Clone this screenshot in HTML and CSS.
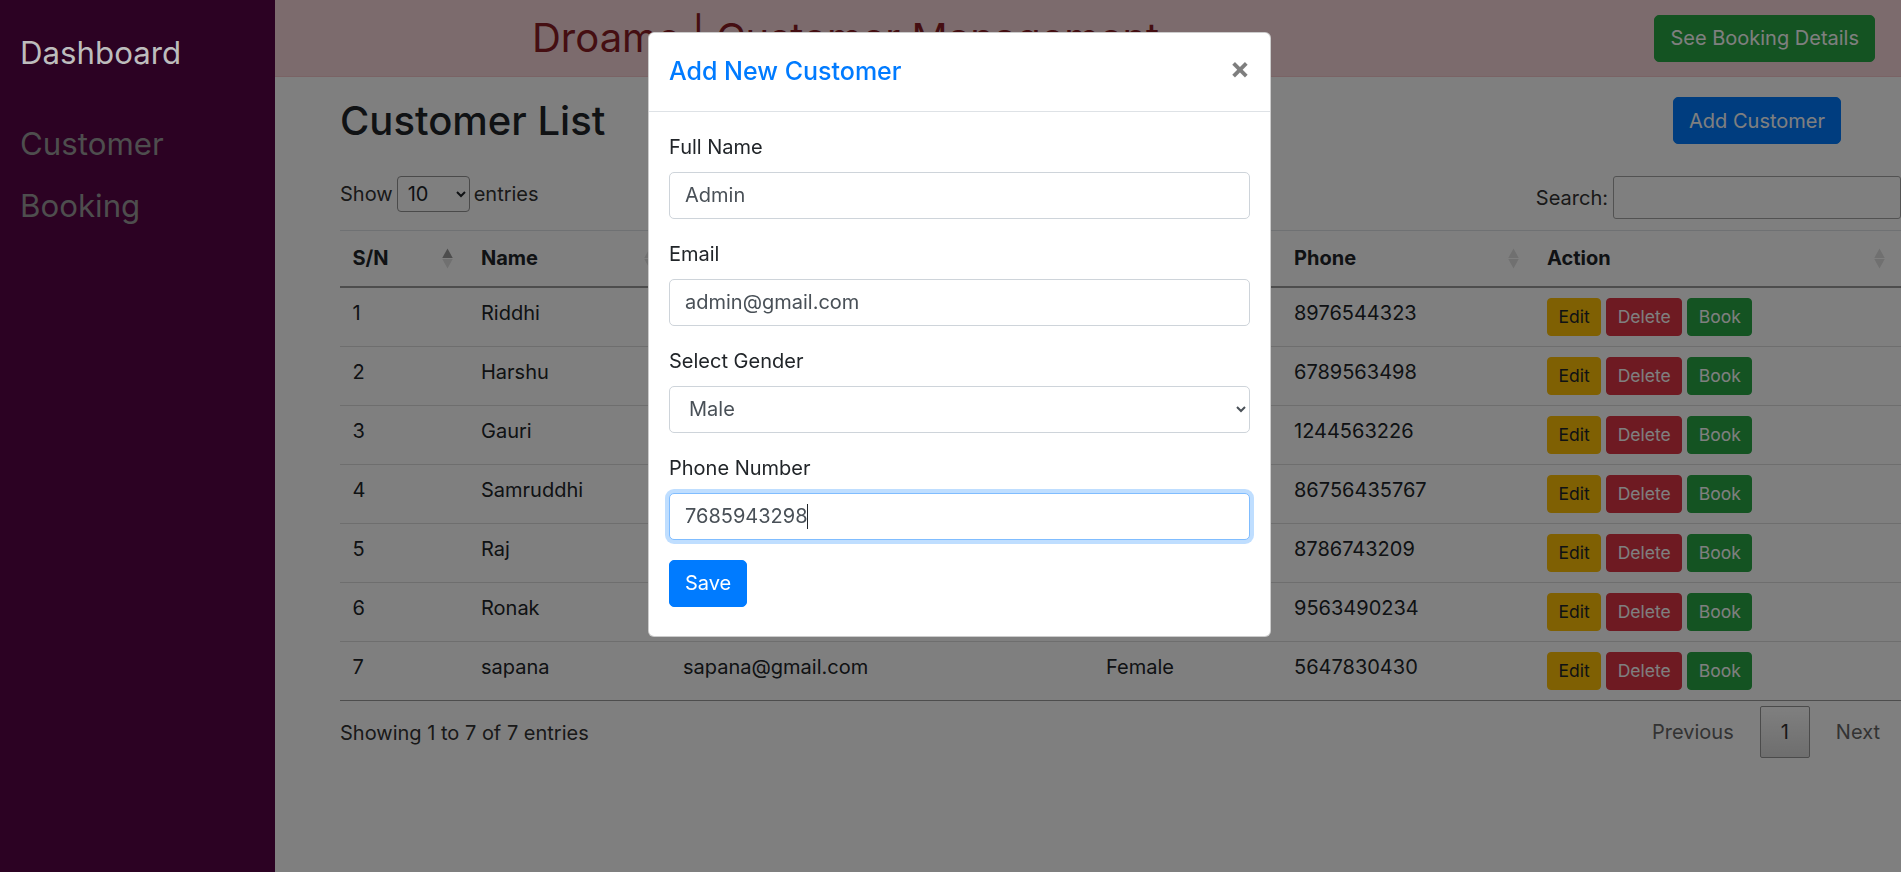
FILE: index.html
```html
<!DOCTYPE html>
<html lang="en">
<head>
<meta charset="utf-8">
<title>Droame | Customer Management</title>
<link rel="stylesheet" href="styles.css">
</head>
<body>
<aside class="sidebar">
  <div class="brand">Dashboard</div>
  <ul class="nav">
    <li>Customer</li>
    <li>Booking</li>
  </ul>
</aside>

<div class="main">
  <header class="topbar">
    <h1>Droame | Customer Management</h1>
    <button class="btn btn-success">See Booking Details</button>
  </header>

  <div class="content">
    <div class="title-row">
      <h2>Customer List</h2>
      <button class="btn btn-primary">Add Customer</button>
    </div>

    <div class="dt-top">
      <label class="length">Show
        <select class="length-select"><option>10</option><option>25</option><option>50</option></select>
        entries</label>
      <label class="search">Search:<input type="search" class="search-input"></label>
    </div>

    <table class="data">
      <colgroup>
        <col class="c-sn"><col class="c-name"><col class="c-email"><col class="c-gender"><col class="c-phone"><col class="c-action">
      </colgroup>
      <thead>
        <tr>
          <th>S/N<svg class="sort" viewBox="0 0 10 20"><polygon points="5,0.5 10,9.5 0,9.5" fill="#9a9a9a"/><polygon points="0,10.5 10,10.5 5,19.5" fill="#e0e0e0"/></svg></th>
          <th>Name<svg class="sort" viewBox="0 0 10 20"><polygon points="5,0.5 10,9.5 0,9.5" fill="#e0e0e0"/><polygon points="0,10.5 10,10.5 5,19.5" fill="#e0e0e0"/></svg></th>
          <th>Email<svg class="sort" viewBox="0 0 10 20"><polygon points="5,0.5 10,9.5 0,9.5" fill="#e0e0e0"/><polygon points="0,10.5 10,10.5 5,19.5" fill="#e0e0e0"/></svg></th>
          <th>Gender<svg class="sort" viewBox="0 0 10 20"><polygon points="5,0.5 10,9.5 0,9.5" fill="#e0e0e0"/><polygon points="0,10.5 10,10.5 5,19.5" fill="#e0e0e0"/></svg></th>
          <th>Phone<svg class="sort" viewBox="0 0 10 20"><polygon points="5,0.5 10,9.5 0,9.5" fill="#e0e0e0"/><polygon points="0,10.5 10,10.5 5,19.5" fill="#e0e0e0"/></svg></th>
          <th>Action<svg class="sort" viewBox="0 0 10 20"><polygon points="5,0.5 10,9.5 0,9.5" fill="#e0e0e0"/><polygon points="0,10.5 10,10.5 5,19.5" fill="#e0e0e0"/></svg></th>
        </tr>
      </thead>
      <tbody>
        <tr><td>1</td><td>Riddhi</td><td>riddhi@gmail.com</td><td>Female</td><td>8976544323</td><td><div class="actions"><button class="btn btn-sm btn-warning">Edit</button><button class="btn btn-sm btn-danger">Delete</button><button class="btn btn-sm btn-success">Book</button></div></td></tr>
        <tr><td>2</td><td>Harshu</td><td>harshu@gmail.com</td><td>Female</td><td>6789563498</td><td><div class="actions"><button class="btn btn-sm btn-warning">Edit</button><button class="btn btn-sm btn-danger">Delete</button><button class="btn btn-sm btn-success">Book</button></div></td></tr>
        <tr><td>3</td><td>Gauri</td><td>gauri@gmail.com</td><td>Female</td><td>1244563226</td><td><div class="actions"><button class="btn btn-sm btn-warning">Edit</button><button class="btn btn-sm btn-danger">Delete</button><button class="btn btn-sm btn-success">Book</button></div></td></tr>
        <tr><td>4</td><td>Samruddhi</td><td>samruddhi@gmail.com</td><td>Female</td><td>86756435767</td><td><div class="actions"><button class="btn btn-sm btn-warning">Edit</button><button class="btn btn-sm btn-danger">Delete</button><button class="btn btn-sm btn-success">Book</button></div></td></tr>
        <tr><td>5</td><td>Raj</td><td>raj@gmail.com</td><td>Male</td><td>8786743209</td><td><div class="actions"><button class="btn btn-sm btn-warning">Edit</button><button class="btn btn-sm btn-danger">Delete</button><button class="btn btn-sm btn-success">Book</button></div></td></tr>
        <tr><td>6</td><td>Ronak</td><td>ronak@gmail.com</td><td>Male</td><td>9563490234</td><td><div class="actions"><button class="btn btn-sm btn-warning">Edit</button><button class="btn btn-sm btn-danger">Delete</button><button class="btn btn-sm btn-success">Book</button></div></td></tr>
        <tr><td>7</td><td>sapana</td><td>sapana@gmail.com</td><td>Female</td><td>5647830430</td><td><div class="actions"><button class="btn btn-sm btn-warning">Edit</button><button class="btn btn-sm btn-danger">Delete</button><button class="btn btn-sm btn-success">Book</button></div></td></tr>
      </tbody>
    </table>

    <div class="dt-bottom">
      <div class="info">Showing 1 to 7 of 7 entries</div>
      <div class="paginate">
        <span class="page-btn disabled">Previous</span>
        <span class="page-btn current">1</span>
        <span class="page-btn disabled">Next</span>
      </div>
    </div>
  </div>
</div>

<div class="backdrop"></div>

<div class="modal">
  <div class="modal-header">
    <h5 class="modal-title">Add New Customer</h5>
    <button class="close" type="button">×</button>
  </div>
  <div class="modal-body">
    <div class="form-group">
      <label class="form-label">Full Name</label>
      <input class="form-control" type="text" value="Admin">
    </div>
    <div class="form-group">
      <label class="form-label">Email</label>
      <input class="form-control" type="email" value="admin@gmail.com">
    </div>
    <div class="form-group">
      <label class="form-label">Select Gender</label>
      <select class="form-control"><option>Male</option><option>Female</option></select>
    </div>
    <div class="form-group">
      <label class="form-label">Phone Number</label>
      <div class="caret-wrap">
        <input class="form-control is-focused" type="text" value="7685943298">
        <span class="caret"></span>
      </div>
    </div>
    <button class="btn btn-primary">Save</button>
  </div>
</div>
</body>
</html>
```

FILE: styles.css
```css
* { box-sizing: border-box; }

html, body {
  margin: 0;
  height: 100%;
}

body {
  font-family: Inter, "Noto Sans", sans-serif;
  font-size: 20px;
  line-height: 1.5;
  color: #212529;
  background: #fff;
  display: flex;
  overflow: hidden;
}

/* Sidebar */
.sidebar {
  flex: 0 0 275px;
  width: 275px;
  height: 100vh;
  background: #2c0223;
  position: relative;
  z-index: 1050;
  padding: 35px 0 0 20px;
}

.brand {
  font-size: 31.25px;
  line-height: 36px;
  color: #bdbdbd;
}

.nav {
  list-style: none;
  margin: 42px 0 0;
  padding: 0;
}

.nav li {
  font-size: 31.25px;
  line-height: 36px;
  padding: 13px 0;
  color: #4e4e4e;
}

/* Main */
.main {
  flex: 1;
  min-width: 0;
}

.topbar {
  height: 77px;
  background: #f8d7da;
  border-bottom: 1px solid #f5c6cb;
  display: flex;
  align-items: center;
  justify-content: space-between;
  padding: 0 26px 0 257px;
}

.topbar h1 {
  margin: 0;
  font-size: 40px;
  font-weight: 400;
  line-height: 1.2;
  color: #8a1c24;
}

.btn {
  display: inline-block;
  font-family: inherit;
  font-size: 20px;
  line-height: 30px;
  padding: 7.5px 15px;
  border: 1px solid transparent;
  border-radius: 5px;
  color: #fff;
  cursor: pointer;
}

.btn-success { background: #28a745; border-color: #28a745; }
.btn-primary { background: #007bff; border-color: #007bff; }
.btn-danger { background: #dc3545; border-color: #dc3545; }
.btn-warning { background: #ffc107; border-color: #ffc107; color: #212529; }

.btn-sm {
  font-size: 17.5px;
  line-height: 26px;
  padding: 5px 10.5px;
  border-radius: 4px;
}

.content {
  padding: 20px 0 0 65px;
}

.title-row {
  display: flex;
  justify-content: space-between;
  align-items: flex-start;
  padding-right: 60px;
}

.title-row h2 {
  margin: 0;
  font-size: 40px;
  font-weight: 500;
  line-height: 1.2;
}

.dt-top {
  display: flex;
  justify-content: space-between;
  align-items: flex-start;
  margin-top: 31px;
  color: #333;
}

.length {
  display: flex;
  align-items: center;
  height: 36px;
}

.length-select {
  width: 73px;
  height: 36px;
  margin: 0 4px;
  padding: 0 6px;
  font-family: inherit;
  font-size: 20px;
  color: #212529;
  background: #fff;
  border: 1px solid #949494;
  border-radius: 4px;
}

.search {
  display: flex;
  align-items: center;
}

.search-input {
  width: 288px;
  height: 43px;
  margin-left: 5px;
  border: 1px solid #a4a4a4;
  border-radius: 3px;
  background: #fff;
}

/* Table */
.data {
  width: 1561px;
  margin-top: 11px;
  border-collapse: separate;
  border-spacing: 0;
  table-layout: fixed;
}

.c-sn { width: 128.5px; }
.c-name { width: 202px; }
.c-email { width: 423px; }
.c-gender { width: 188px; }
.c-phone { width: 253px; }
.c-action { width: 366.5px; }

.data th {
  position: relative;
  text-align: left;
  font-weight: 700;
  line-height: 30px;
  padding: 12px 22px 13px 12.5px;
  border-top: 1px solid #dee2e6;
  border-bottom: 2px solid #9a9a9a;
}

.sort {
  position: absolute;
  right: 16px;
  top: 50%;
  width: 11px;
  height: 21px;
  margin-top: -10.5px;
}

.data td {
  vertical-align: top;
  line-height: 30px;
  padding: 10px 12.5px;
  border-top: 1px solid #dcdcdc;
}

.data tbody tr:first-child td { border-top: 0; }
.data tbody tr:last-child td { border-bottom: 1px solid #9a9a9a; }

.actions {
  display: flex;
  gap: 5px;
}

.dt-bottom {
  display: flex;
  justify-content: space-between;
  align-items: flex-start;
  color: #333;
}

.info {
  padding-top: 17px;
  line-height: 30px;
}

.paginate {
  display: flex;
  gap: 5px;
  padding-top: 5px;
}

.page-btn {
  display: inline-block;
  padding: 10px 20px;
  line-height: 30px;
  border: 1px solid transparent;
  border-radius: 2px;
  color: #666;
}

.page-btn.current {
  padding: 10px 20px;
  color: #333;
  border-color: #979797;
  background: linear-gradient(#fff, #dcdcdc);
}

/* Backdrop + modal */
.backdrop {
  position: fixed;
  inset: 0;
  background: rgba(0, 0, 0, 0.5);
  z-index: 1040;
}

.modal {
  position: fixed;
  top: 32px;
  left: calc(50% - 302.5px);
  width: 623px;
  z-index: 1060;
  background: #fff;
  border: 1px solid rgba(0, 0, 0, 0.2);
  border-radius: 6px;
}

.modal-header {
  display: flex;
  align-items: flex-start;
  justify-content: space-between;
  padding: 20px;
  border-bottom: 1px solid #dee2e6;
}

.modal-title {
  margin: 0;
  font-size: 25px;
  font-weight: 500;
  line-height: 37.5px;
  color: #007bff;
}

.close {
  font-family: inherit;
  font-size: 30px;
  font-weight: 700;
  line-height: 1;
  color: #000;
  opacity: 0.5;
  background: none;
  border: 0;
  padding: 20px;
  margin: -20px -20px -20px auto;
}

.modal-body {
  padding: 20px 20px 29px;
}

.form-group {
  margin-bottom: 20px;
}

.form-label {
  display: block;
  margin-bottom: 10px;
  line-height: 30px;
}

.form-control {
  display: block;
  width: 100%;
  height: 47px;
  padding: 7.5px 15px;
  font-family: inherit;
  font-size: 20px;
  line-height: 30px;
  color: #495057;
  background: #fff;
  border: 1px solid #ced4da;
  border-radius: 5px;
  outline: none;
}

.form-control.is-focused {
  border-color: #80bdff;
  box-shadow: 0 0 0 4px rgba(0, 123, 255, 0.25);
}

.caret-wrap {
  position: relative;
}

.caret {
  position: absolute;
  left: 138px;
  top: 11px;
  width: 1px;
  height: 25px;
  background: #212529;
}
```
